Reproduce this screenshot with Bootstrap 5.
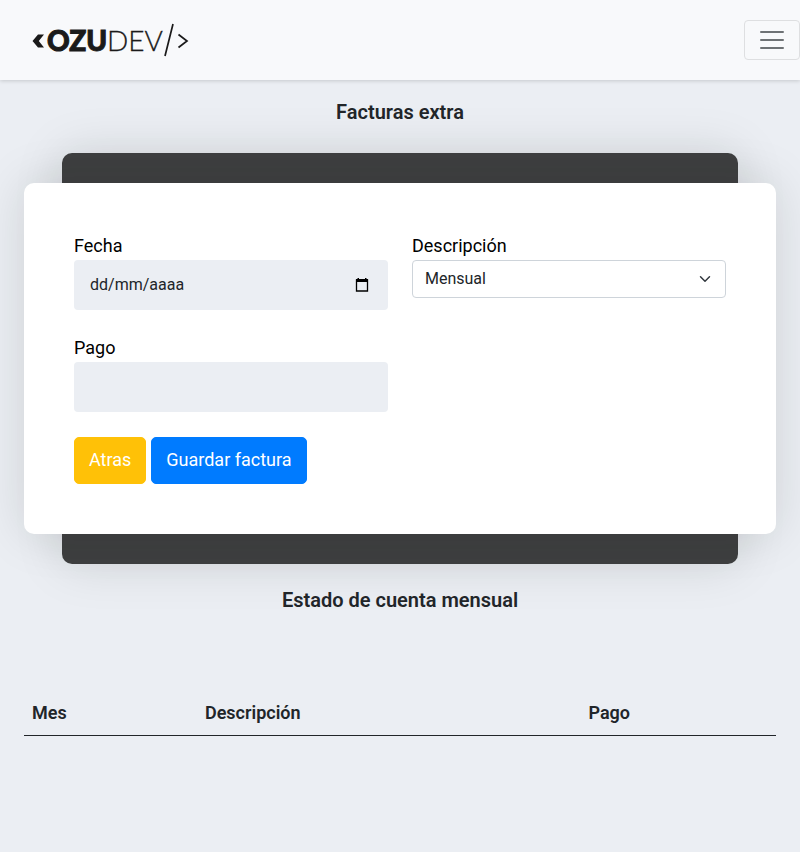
<!DOCTYPE html>
<html lang="es">
<head>
<meta charset="utf-8">
<meta name="viewport" content="width=device-width, initial-scale=1">
<title>Facturas extra</title>
<link href="https://cdn.jsdelivr.net/npm/bootstrap@5.3.0/dist/css/bootstrap.min.css" rel="stylesheet">
<style>
body { font-family: Roboto, "Liberation Sans", sans-serif; background: #ebeef3; color: #212529; min-height: 100vh; }
.topbar { height: 80px; background: #f8f9fb; box-shadow: 0 1px 4px rgba(0, 0, 0, .16); }
.topbar .navbar-toggler { padding: 4px 12px; height: 40px; border-radius: 4px; border-color: #dedfe1; }
.topbar .navbar-toggler-icon { width: 30px; height: 30px; display: block; opacity: .85; }
.brand-logo { display: block; width: 160px; height: 40px; }
.brand-bold { font: 900 28px Lato, sans-serif; stroke: #1a1a1a; stroke-width: 1px; }
.brand-thin { font: 300 28px Lato, sans-serif; stroke: #1a1a1a; stroke-width: .3px; }
.section-title { font-size: 20px; line-height: 24px; font-weight: 600; }
.panel-back, .panel-front { border-radius: 10px; box-shadow: 0 0 50px rgba(20, 30, 20, .13); }
.panel-back { background: #3e3f40; margin: 29px 38px 24px; padding: 30px 0; }
.panel-front { background: #fff; margin: 0 -38px; padding: 50px; }
.field-group { margin-bottom: 25px; }
.field-label { display: block; font-size: 18px; line-height: 25px; margin-bottom: 2px; color: #000; }
.soft-input { height: 50px; padding: 0 16px 2px; border: 0; border-radius: 4px; background: #ebeef3; color: #212529; }
.soft-input::placeholder { color: #212529; opacity: 1; }
.calendar-btn { right: 19px; top: 17px; width: 14px; height: 16px; }
.form-select { height: 38px; border-color: #ced4da; border-radius: 4px; background-color: #fff; padding-left: 12px; }
.button-row { gap: 5px; }
.big-btn { font-size: 18px; line-height: 27px; padding: 8px 14px 10px; height: 47px; border-radius: 5px; color: #fff; }
.btn-save { background: #007bff; border-color: #007bff; }
.bill-table { font-size: 18px; line-height: 25px; --bs-table-bg: transparent; }
.bill-table th { font-weight: 600; padding: 8px 8px 10px; border-bottom: 1px solid #212529; }
</style>
</head>
<body>
<nav class="topbar navbar navbar-light p-0 d-flex justify-content-between">
  <a class="navbar-brand p-0 m-0 ps-4 ms-2" href="#" aria-label="OZUDEV">
    <svg class="brand-logo" viewBox="0 0 160 40" fill="#1a1a1a">
      <path d="M6 14.500H12L6.800 21L12 27.500H6L0.500 21Z"/>
      <text class="brand-bold" x="15" y="31">OZU</text>
      <text class="brand-thin" x="75" y="31">DEV</text>
      <path d="M141 4L133 36M146.500 14.500L155 21L146.500 27.500" fill="none" stroke="#1a1a1a" stroke-width="1.700"/>
    </svg>
  </a>
  <button class="navbar-toggler" type="button" aria-label="Menú"><span class="navbar-toggler-icon"></span></button>
</nav>

<main class="px-4">
  <h1 class="section-title text-center mb-0 pt-3 mt-1">Facturas extra</h1>
  <section class="panel-back">
    <form class="panel-front">
      <div class="row">
        <div class="col-6 field-group">
          <label class="field-label" for="fecha">Fecha</label>
          <div class="position-relative">
            <input class="form-control soft-input" id="fecha" type="text" placeholder="dd/mm/aaaa">
            <button class="calendar-btn position-absolute border-0 bg-transparent p-0 d-flex" type="button" aria-label="Abrir calendario">
              <svg width="14" height="16" viewBox="0 0 14 16"><path d="M1.500 3H12.500V14H1.500Z" fill="none" stroke="#000" stroke-width="1.300"/><path d="M1 2H13V5H1ZM2.500 1H4V3H2.500ZM10 1H11.500V3H10Z"/></svg>
            </button>
          </div>
        </div>
        <div class="col-6 field-group">
          <label class="field-label" for="descripcion">Descripción</label>
          <select class="form-select" id="descripcion"><option>Mensual</option></select>
        </div>
        <div class="col-6 field-group">
          <label class="field-label" for="pago">Pago</label>
          <input class="form-control soft-input" id="pago" type="text">
        </div>
      </div>
      <div class="d-flex button-row">
        <button class="btn btn-warning big-btn" type="button">Atras</button>
        <button class="btn btn-save big-btn" type="submit">Guardar factura</button>
      </div>
    </form>
  </section>
  <h2 class="section-title text-center mb-0">Estado de cuenta mensual</h2>
  <div class="pt-5 mt-4">
    <table class="table bill-table mb-0 mt-2">
      <colgroup><col style="width:23%"><col style="width:51%"><col></colgroup>
      <thead><tr><th scope="col">Mes</th><th scope="col">Descripción</th><th scope="col">Pago</th></tr></thead>
    </table>
  </div>
</main>
<script src="https://cdn.jsdelivr.net/npm/bootstrap@5.3.0/dist/js/bootstrap.bundle.min.js"></script>
</body>
</html>
